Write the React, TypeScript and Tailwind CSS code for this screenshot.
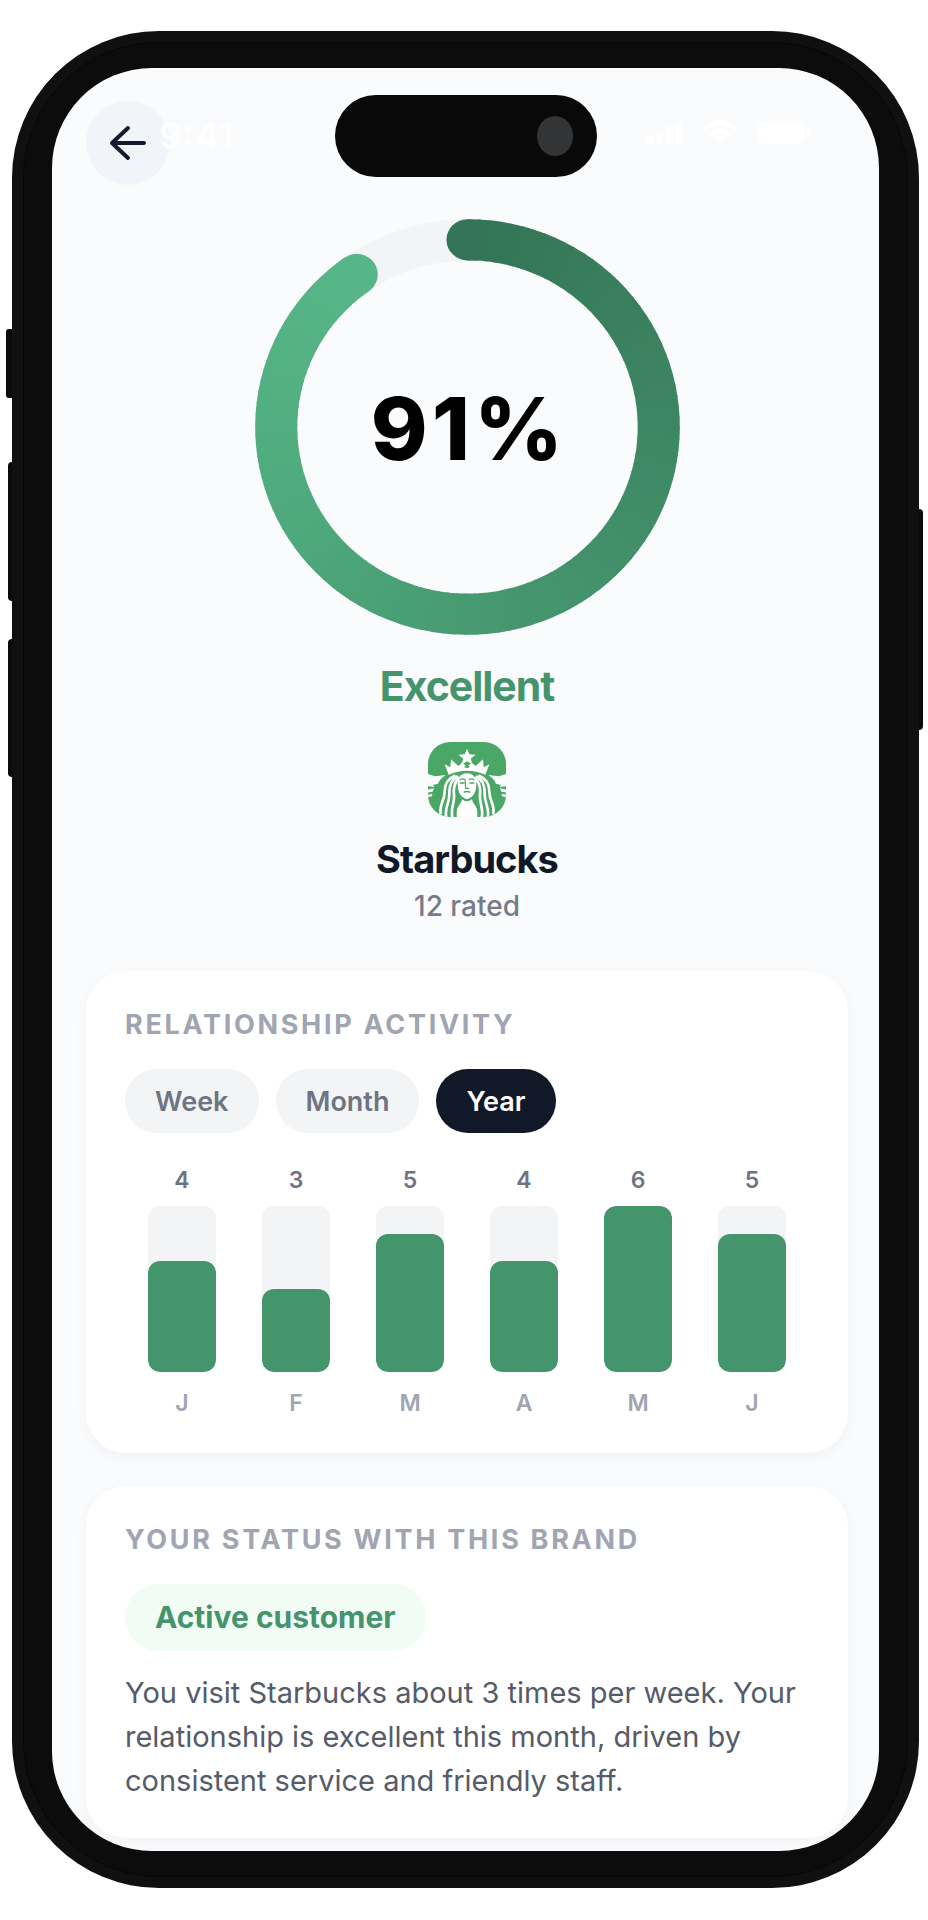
import { useState } from "react";

const PERIODS = ["Week", "Month", "Year"];

const ACTIVITY = [
  { label: "J", value: 4 },
  { label: "F", value: 3 },
  { label: "M", value: 5 },
  { label: "A", value: 4 },
  { label: "M", value: 6 },
  { label: "J", value: 5 },
];

const RING_STOPS = [
  [51, 117, 86],
  [61, 133, 98],
  [69, 150, 110],
  [78, 170, 124],
  [87, 182, 135],
];

function ringColor(t: number) {
  const pos = t * (RING_STOPS.length - 1);
  const i = Math.min(Math.floor(pos), RING_STOPS.length - 2);
  const f = pos - i;
  const c = RING_STOPS[i].map((v, k) => Math.round(v + (RING_STOPS[i + 1][k] - v) * f));
  return `rgb(${c.join(",")})`;
}

function ringPoint(deg: number) {
  const a = (deg * Math.PI) / 180;
  return [50 + 45 * Math.sin(a), 50 - 45 * Math.cos(a)];
}

function ScoreRing() {
  const sweep = 324.6;
  const count = 108;
  const step = sweep / count;
  const end = ringPoint(sweep);
  return (
    <svg viewBox="0 0 100 100" preserveAspectRatio="none" className="col-start-1 row-start-1 h-full w-full" aria-hidden="true">
      <circle cx="50" cy="50" r="45" fill="none" stroke="#f3f4f6" strokeWidth="9.9" />
      {Array.from({ length: count }, (_, i) => {
        const a = ringPoint(i * step);
        const b = ringPoint(Math.min((i + 1) * step + 0.5, sweep));
        return (
          <path
            key={i}
            d={`M${a[0]} ${a[1]}A45 45 0 0 1 ${b[0]} ${b[1]}`}
            fill="none"
            stroke={ringColor(i / (count - 1))}
            strokeWidth="9.9"
          />
        );
      })}
      <circle cx="50" cy="5" r="4.95" fill={ringColor(0)} />
      <circle cx={end[0]} cy={end[1]} r="4.95" fill={ringColor(1)} />
    </svg>
  );
}

function SirenHalf() {
  return (
    <>
      <path d="M-2 96L20 103L52 99Q35 110 29 125L14 129L18 135L-2 133Z" fill="#fafbfd" />
      <path d="M-2 143L17 139L13 149L-2 152Z" fill="#fafbfd" />
      <path d="M-2 158L12 156L11 163L-2 166Z" fill="#fafbfd" />
      <g fill="none" stroke="#fff" strokeWidth="8" strokeLinecap="round">
        <path d="M78 102C58 110 49 128 49 150C49 176 32 188 37 214" />
        <path d="M86 104C67 116 62 134 63 156C64 184 47 198 54 226" />
        <path d="M92 108C77 122 75 138 77 158C80 184 64 200 73 230" />
      </g>
    </>
  );
}

function StarbucksLogo() {
  return (
    <svg viewBox="0 0 232 225" className="mt-8 h-[75px] w-[78px] overflow-hidden rounded-[22px] bg-[#4aa766]" role="img" aria-label="Starbucks logo">
      <SirenHalf />
      <g transform="translate(232 0) scale(-1 1)">
        <SirenHalf />
      </g>
      <path d="M116 20L123 37L142 38L127 50L133 68L116 58L99 68L105 50L90 38L109 37Z" fill="#fff" />
      <path d="M49 67L66 76L68 52L90 72L102 62L116 74L130 62L142 72L164 52L166 76L183 67L171 98Q116 74 61 98Z" fill="#fff" />
      <path d="M107 75Q116 65 125 75Q116 81 107 75Z" fill="#4aa766" />
      <path d="M116 94C96 95 88 109 88 129C88 151 101 171 116 171C131 171 144 151 144 129C144 109 136 95 116 94Z" fill="#fff" />
      <path d="M101 172Q116 184 131 172Q132 182 140 190Q150 202 146 228H86Q82 202 92 190Q100 182 101 172Z" fill="#fff" />
      <g fill="none" stroke="#4aa766" strokeLinecap="round">
        <path d="M95 114Q103 108 110 113L112 136M137 114Q129 108 122 113" strokeWidth="3.5" />
        <path d="M96 123H107M125 123H136" strokeWidth="5" />
        <path d="M111 139H121" strokeWidth="3.5" />
        <path d="M108 150Q116 147 124 150" strokeWidth="5" />
        <path d="M99 165Q116 182 133 165" strokeWidth="4" />
      </g>
    </svg>
  );
}

function StatusIcons() {
  return (
    <svg width="168" height="28" viewBox="0 0 168 28" fill="#ffffff" aria-hidden="true">
      <rect x="3" y="17" width="7" height="8" rx="2" />
      <rect x="13" y="13" width="7" height="12" rx="2" />
      <rect x="23" y="7" width="7" height="18" rx="2" />
      <rect x="32" y="2" width="7" height="23" rx="2" />
      <g fill="none" stroke="#ffffff" strokeWidth="5">
        <path d="M61 10Q77 -3 93 10" />
        <path d="M67 16Q77 8 87 16" />
      </g>
      <path d="M71 19Q77 15 83 19L77 25Z" />
      <rect x="115" y="2" width="47" height="23" rx="7" />
      <rect x="164" y="10" width="3" height="8" rx="1" />
    </svg>
  );
}

function SectionTitle({ children }: { children: string }) {
  return (
    <h2 className="text-[27px] leading-[34px] font-bold tracking-widest text-[#a0a5b1] uppercase">{children}</h2>
  );
}

const CARD =
  "rounded-[40px] bg-white px-[39px] pt-[37px] shadow-[0_4px_16px_rgba(15,23,42,0.04)]";

export default function App() {
  const [period, setPeriod] = useState("Year");
  const max = Math.max(...ACTIVITY.map((d) => d.value));

  return (
    <main className="min-h-screen bg-white pt-[31px] pr-[9px] pb-[31px] pl-3 font-['Inter',sans-serif]">
      <div className="relative mx-auto max-w-[907px]">
        <span className="absolute top-[298px] -left-[6px] h-[69px] w-3 rounded-[3px] bg-[#0a0c0b]" />
        <span className="absolute top-[431px] -left-1 h-[139px] w-3 rounded-[4px] bg-[#0a0c0b]" />
        <span className="absolute top-[608px] -left-1 h-[138px] w-3 rounded-[4px] bg-[#0a0c0b]" />
        <span className="absolute top-[478px] -right-1 h-[221px] w-3 rounded-[4px] bg-[#0a0c0b]" />

        <div className="relative rounded-[147px] bg-[#0e1110] p-[11px]">
          <div className="rounded-[136px] border border-[#060606] bg-[#0c0c0c] px-7 py-[25px]">
            <div className="relative overflow-hidden rounded-[100px] bg-[#fafbfd] pt-[33px] pr-[31px] pb-[13px] pl-[34px]">
              <button
                type="button"
                aria-label="Back"
                className="flex h-[84px] w-[84px] items-center justify-center rounded-full bg-[#f1f4f9]"
              >
                <svg width="38" height="38" viewBox="0 0 38 38" fill="none" stroke="#141c2b" strokeWidth="4" strokeLinecap="round" strokeLinejoin="round" aria-hidden="true">
                  <path d="M35 19H3M19 4L3 19L19 34" />
                </svg>
              </button>

              <div className="absolute top-[46px] left-[107px] text-[37px] leading-[44px] font-semibold text-white">9:41</div>
              <div className="absolute top-[51px] right-[68px]">
                <StatusIcons />
              </div>
              <div className="absolute top-[27px] left-1/2 flex h-[82px] w-[262px] -translate-x-1/2 items-center justify-end rounded-full bg-[#090909] pr-6">
                <span className="h-10 w-9 rounded-[50%] bg-[#333436]" />
              </div>

              <div className="mt-[34px] flex flex-col items-center">
                <div className="grid h-[416px] w-[425px] place-items-center">
                  <ScoreRing />
                  <p className="col-start-1 row-start-1 pt-1 pl-1 text-[86px] leading-none font-extrabold tracking-wider text-black">
                    91%
                  </p>
                </div>
                <p className="mt-[27px] text-[41px] leading-[48px] font-bold tracking-tight text-[#45946d]">Excellent</p>
                <StarbucksLogo />
                <h1 className="mt-5 text-[38px] leading-[44px] font-bold tracking-tight text-[#111827]">Starbucks</h1>
                <p className="mt-[9px] text-[28px] leading-8 font-medium text-[#777b88]">12 rated</p>
              </div>

              <section className={`mt-[49px] pb-9 ${CARD}`}>
                <SectionTitle>Relationship activity</SectionTitle>
                <div className="mt-[27px] flex gap-[17px]">
                  {PERIODS.map((p) => (
                    <button
                      key={p}
                      type="button"
                      aria-pressed={p === period}
                      onClick={() => setPeriod(p)}
                      className={`h-16 rounded-full px-[30px] pt-px text-[27px] leading-8 font-semibold ${
                        p === period ? "bg-[#111827] text-white" : "bg-[#f3f4f6] text-[#6f7482]"
                      }`}
                    >
                      {p}
                    </button>
                  ))}
                </div>
                <div className="mt-[33px] grid grid-cols-6">
                  {ACTIVITY.map((d, i) => (
                    <div key={i} className="flex flex-col items-center text-[23px] leading-7 font-semibold">
                      <span className="text-[#6f7482]">{d.value}</span>
                      <div className="mt-3 flex h-[166px] w-[68px] items-end overflow-hidden rounded-xl bg-[#f3f4f6]">
                        <div className="w-full rounded-xl bg-[#44946c]" style={{ height: `${(d.value / max) * 100}%` }} />
                      </div>
                      <span className="mt-[17px] text-[#a0a5b1]">{d.label}</span>
                    </div>
                  ))}
                </div>
              </section>

              <section className={`mt-[33px] pb-[35px] ${CARD}`}>
                <SectionTitle>Your status with this brand</SectionTitle>
                <div className="mt-[27px] flex">
                  <span className="rounded-full bg-[#f1fdf4] px-[30px] py-4 text-[30px] leading-[35px] font-bold text-[#45946d]">
                    Active customer
                  </span>
                </div>
                <p className="mt-5 text-[29px] leading-[44px] text-[#555b69]">
                  You visit Starbucks about 3 times per week. Your relationship is excellent this month, driven by
                  consistent service and friendly staff.
                </p>
              </section>
            </div>
          </div>
        </div>
      </div>
    </main>
  );
}
